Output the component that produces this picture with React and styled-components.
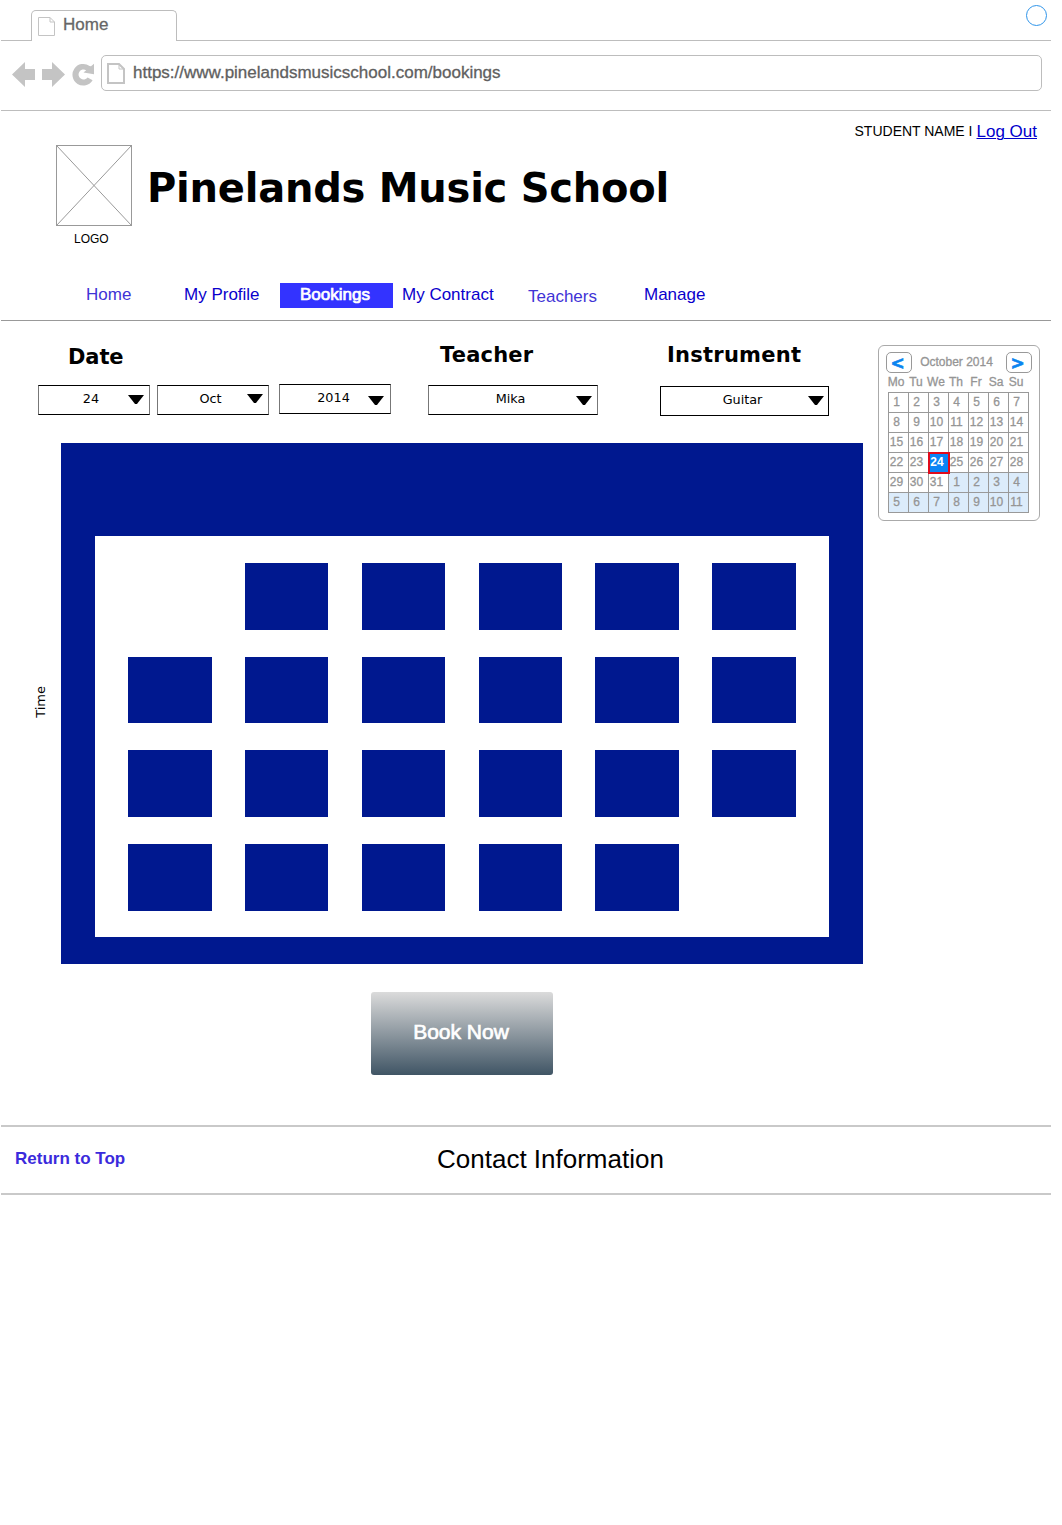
import React from "react";
import styled, { createGlobalStyle } from "styled-components";

const SANS = '"Liberation Sans", Arial, sans-serif';
const WIDE = '"DejaVu Sans", Verdana, sans-serif';
const NAVY = "#00188f";
const LINE = "#bdbdbd";

const GlobalStyle = createGlobalStyle`
  * { box-sizing: border-box; }
  body { margin: 0; background: #fff; font-family: ${SANS}; }
  #root { line-height: 1; }
`;

const Page = styled.div`
  width: 1051px;
  min-height: 1525px;
  padding-left: 1px;
  white-space: nowrap;
`;

/* Browser chrome */
const TabStrip = styled.div`
  display: flex;
  align-items: flex-end;
  height: 41px;
`;
const StripLine = styled.div`
  width: ${(p) => p.$width || "auto"};
  flex: ${(p) => (p.$width ? "none" : 1)};
  height: 41px;
  border-bottom: 1px solid ${LINE};
  display: flex;
  justify-content: flex-end;
  padding: 5px 4px 0 0;
`;
const Tab = styled.div`
  display: flex;
  gap: 8px;
  width: 146px;
  height: 31px;
  padding: 6px 0 0 6px;
  border: 1px solid ${LINE};
  border-bottom: 0;
  border-radius: 5px 5px 0 0;
`;
const TabTitle = styled.span`
  font-size: 17px;
  line-height: 16px;
  color: #666;
  -webkit-text-stroke: 0.3px #666;
`;
const Ring = styled.span`
  width: 21px;
  height: 21px;
  border: 1px solid #2f95ea;
  border-radius: 50%;
`;
const Toolbar = styled.div`
  display: flex;
  height: 70px;
  padding: 14px 9px 0 11px;
  border-bottom: 1px solid ${LINE};
`;
const Controls = styled.div`
  display: flex;
  gap: 7px;
  width: 89px;
  padding-top: 7px;
`;
const AddressBar = styled.div`
  display: flex;
  gap: 8px;
  flex: 1;
  height: 36px;
  padding: 7px 0 0 5px;
  border: 1px solid ${LINE};
  border-radius: 5px;
`;
const Address = styled.span`
  font-size: 17px;
  line-height: 20px;
  color: #606060;
  -webkit-text-stroke: 0.3px #606060;
`;

/* Site header */
const Header = styled.header`
  height: 210px;
  border-bottom: 1px solid #999;
`;
const Account = styled.div`
  display: flex;
  justify-content: flex-end;
  align-items: flex-start;
  gap: 4px;
  height: 34px;
  padding: 7px 14px 0 0;
`;
const StudentName = styled.span`
  font-size: 14px;
  line-height: 26px;
`;
const LogOut = styled.a`
  font-size: 17px;
  line-height: 27px;
  color: #0000cc;
  text-decoration: underline;
  text-decoration-thickness: 1px;
  text-underline-offset: 1px;
`;
const Brand = styled.div`
  display: flex;
  gap: 16px;
  height: 138px;
  padding-left: 55px;
`;
const LogoBlock = styled.div`
  display: flex;
  flex-direction: column;
  width: 76px;
`;
const LogoCaption = styled.span`
  font-size: 12px;
  line-height: 26px;
  padding-left: 18px;
`;
const Title = styled.h1`
  margin: 0 0 0 -1px;
  padding-top: 18px;
  font: bold 40px/50px ${WIDE};
  letter-spacing: -0.24px;
`;
const Nav = styled.nav`
  display: grid;
  grid-template-columns: 98px 96px 122px 126px 116px auto;
  padding-left: 85px;
`;
const NavLink = styled.a`
  font-size: 17px;
  line-height: 23px;
  color: ${(p) => (p.$visited ? "#3f33d6" : "#0a00cc")};
  padding-top: ${(p) => (p.$low ? 2 : 0)}px;
`;
const ActiveLink = styled(NavLink)`
  width: 113px;
  height: 25px;
  padding-left: 20px;
  background: #3333ff;
  color: #fff;
  -webkit-text-stroke: 0.7px #fff;
`;

/* Booking area */
const Main = styled.main`
  display: flex;
  gap: 16px;
  height: 804px;
`;
const Booking = styled.div`
  width: 861px;
`;
const Filters = styled.div`
  display: grid;
  grid-template-columns: 390px 232px auto;
  height: 122px;
  padding-left: 37px;
`;
const Heading = styled.h2`
  margin: 0;
  height: 63px;
  padding: ${(p) => p.$top}px 0 0 ${(p) => p.$left}px;
  font: bold 21px/24px ${WIDE};
  letter-spacing: ${(p) => p.$ls || 0}px;
`;
const SelectRow = styled.div`
  display: flex;
`;
const SelectBox = styled.div`
  display: flex;
  width: ${(p) => p.$width}px;
  height: 30px;
  margin: ${(p) => p.$top}px ${(p) => p.$gap || 0}px 0 0;
  padding-right: ${(p) => p.$inset}px;
  border: 1px solid #000;
  border-left-color: ${(p) => p.$side};
  border-right-color: ${(p) => p.$side};
`;
const SelectValue = styled.span`
  flex: 1;
  padding-left: ${(p) => p.$pad}px;
  text-align: center;
  font: 12.8px/26px ${WIDE};
`;
const Arrow = styled.span`
  width: 16px;
  height: 9px;
  margin-top: ${(p) => p.$top}px;
  background: #000;
  clip-path: polygon(0 0, 100% 0, 56% 100%, 44% 100%);
`;
const Schedule = styled.div`
  display: flex;
  height: 521px;
`;
const Axis = styled.div`
  flex: none;
  display: flex;
  align-items: center;
  width: 60.4px;
  padding: 0 0 3px 32px;
`;
const AxisLabel = styled.span`
  font: 13px/16px ${WIDE};
  writing-mode: vertical-rl;
  transform: rotate(180deg);
`;
const Board = styled.div`
  flex: none;
  width: 801.2px;
  padding: 93.4px 33.4px 27px 33.5px;
  background: ${NAVY};
`;
const Slots = styled.div`
  display: grid;
  grid-template-columns: repeat(6, 83.4px);
  grid-template-rows: repeat(4, 66.8px);
  gap: 26.8px 33.4px;
  height: 400.6px;
  padding: 26.7px 33.4px;
  background: #fff;
`;
const Slot = styled.div`
  background: ${(p) => (p.$open ? NAVY : "transparent")};
`;
const BookButton = styled.button`
  display: block;
  width: 182px;
  height: 83px;
  margin: 28px 0 0 370px;
  padding: 0 2px 4px 0;
  border: 0;
  border-radius: 3px;
  background: linear-gradient(#dbdbdb, #405565);
  color: #fff;
  font: 21px/24px ${SANS};
  -webkit-text-stroke: 0.7px #fff;
`;

/* Month picker */
const Picker = styled.aside`
  width: 162px;
  height: 176px;
  margin-top: 24px;
  padding: 7px 0 0 7px;
  border: 1px solid #aaa;
  border-radius: 6px;
  color: #959595;
  font-size: 12px;
`;
const PickerHead = styled.div`
  display: flex;
  width: 146px;
  height: 20px;
  justify-content: space-between;
  line-height: 18px;
  -webkit-text-stroke: 0.3px #959595;
`;
const Month = styled.span`
  margin-left: -5px;
`;
const Step = styled.span`
  width: 26px;
  height: 21px;
  margin-top: -1px;
  padding-right: 3px;
  border: 1px solid #999;
  border-radius: 5px;
  text-align: center;
  color: #0a84f0;
  font: bold 17px/20px ${WIDE};
  -webkit-text-stroke: 0.6px #0a84f0;
`;
const WeekRow = styled.div`
  display: grid;
  grid-template-columns: repeat(7, 20px);
  width: 140px;
  line-height: 19px;
  text-align: center;
  -webkit-text-stroke: 0.3px #959595;
  & > span { justify-self: center; }
`;
const Days = styled.div`
  display: grid;
  grid-template-columns: repeat(7, 20px);
  grid-auto-rows: 20px;
  width: 141px;
  margin-left: 2px;
  border: 1px solid #999;
  border-width: 1px 0 0 1px;
`;
const Day = styled.span`
  padding-right: 4px;
  border: 1px solid #999;
  border-width: 0 1px 1px 0;
  background: ${(p) => (p.$next ? "#dcecfb" : "#fff")};
  text-align: center;
  line-height: 18px;
  -webkit-text-stroke: 0.3px #959595;
`;
const Today = styled.span`
  margin: -1px -1px -1px -1px;
  padding-right: 4px;
  border: 2px solid #e00b1c;
  background: #0a84f5;
  color: #fff;
  font-weight: bold;
  text-align: center;
  line-height: 16px;
  z-index: 1;
`;

/* Footer */
const Footer = styled.footer`
  display: flex;
  height: 70px;
  padding-left: 14px;
  border: solid #c9c9c9;
  border-width: 2px 0;
`;
const ReturnLink = styled.a`
  width: 422px;
  font-size: 17px;
  font-weight: bold;
  line-height: 63px;
  color: #3b2bdc;
`;
const Contact = styled.span`
  font-size: 26px;
  line-height: 64px;
`;

const FileIcon = ({ w, h, stroke, fold }) => {
  const a = stroke / 2;
  return (
    <svg width={w} height={h} fill="none" stroke="#c4c4c4" strokeWidth={stroke}>
      <path d={`M${a} ${a}H${w - fold}L${w - a} ${fold}V${h - a}H${a}Z`} />
      <path d={`M${w - fold} ${a}V${fold}H${w - a}`} strokeWidth="1" />
    </svg>
  );
};

const Select = ({ value, width = 112, top = 1, gap, pad = 14, arrow, inset = 5, side = "#777" }) => (
  <SelectBox $width={width} $top={top} $gap={gap} $side={side} $inset={inset}>
    <SelectValue $pad={pad}>{value}</SelectValue>
    <Arrow $top={arrow} />
  </SelectBox>
);

const days = [...Array(31).keys(), ...Array(11).keys()].map((n) => n + 1);

export default function App() {
  return (
    <Page>
      <GlobalStyle />
      <TabStrip>
        <StripLine $width="30px" />
        <Tab>
          <FileIcon w={17} h={19} stroke={1} fold={5} />
          <TabTitle>Home</TabTitle>
        </Tab>
        <StripLine>
          <Ring />
        </StripLine>
      </TabStrip>
      <Toolbar>
        <Controls>
          <svg width="23" height="25" fill="#c4c4c4">
            <path d="M0 12.5L13 0V7H23V18H13V25Z" />
          </svg>
          <svg width="23" height="25" fill="#c4c4c4">
            <path d="M23 12.5L10 0V7H0V18H10V25Z" />
          </svg>
          <svg width="23" height="25" fill="#c4c4c4">
            <path d="M19 4.2L22 1.8V12.2L11.5 10.6L14.2 8.2A5 5 0 1 0 15.6 15.4L20.6 18.2A10.8 10.8 0 1 1 17.6 4Z" />
          </svg>
        </Controls>
        <AddressBar>
          <FileIcon w={18} h={21} stroke={2} fold={6} />
          <Address>https://www.pinelandsmusicschool.com/bookings</Address>
        </AddressBar>
      </Toolbar>

      <Header>
        <Account>
          <StudentName>STUDENT NAME I</StudentName>
          <LogOut>Log Out</LogOut>
        </Account>
        <Brand>
          <LogoBlock>
            <svg width="76" height="81" fill="none" stroke="#999">
              <rect x="0.5" y="0.5" width="75" height="80" />
              <path d="M0.5 0.5L75.5 80.5M75.5 0.5L0.5 80.5" />
            </svg>
            <LogoCaption>LOGO</LogoCaption>
          </LogoBlock>
          <Title>Pinelands Music School</Title>
        </Brand>
        <Nav>
          <NavLink $visited>Home</NavLink>
          <NavLink>My Profile</NavLink>
          <ActiveLink>Bookings</ActiveLink>
          <NavLink>My Contract</NavLink>
          <NavLink $visited $low>Teachers</NavLink>
          <NavLink>Manage</NavLink>
        </Nav>
      </Header>

      <Main>
        <Booking>
          <Filters>
            <div>
              <Heading $top={24} $left={30} $ls={-0.1}>Date</Heading>
              <SelectRow>
                <Select value="24" gap={7} arrow={9} pad={15} />
                <Select value="Oct" gap={10} arrow={8} pad={16} />
                <Select value="2014" top={0} arrow={11} pad={19} inset={6} />
              </SelectRow>
            </div>
            <div>
              <Heading $top={22} $left={12} $ls={0.2}>Teacher</Heading>
              <Select value="Mika" width={170} pad={16} arrow={10} />
            </div>
            <div>
              <Heading $top={22} $left={7} $ls={0.25}>Instrument</Heading>
              <Select value="Guitar" width={169} top={2} pad={16} arrow={9} inset={4} side="#000" />
            </div>
          </Filters>
          <Schedule>
            <Axis>
              <AxisLabel>Time</AxisLabel>
            </Axis>
            <Board>
              <Slots>
                {Array.from({ length: 24 }, (_, i) => (
                  <Slot key={i} $open={i !== 0 && i !== 23} />
                ))}
              </Slots>
            </Board>
          </Schedule>
          <BookButton>Book Now</BookButton>
        </Booking>
        <Picker>
          <PickerHead>
            <Step>&lt;</Step>
            <Month>October 2014</Month>
            <Step>&gt;</Step>
          </PickerHead>
          <WeekRow>
            {["Mo", "Tu", "We", "Th", "Fr", "Sa", "Su"].map((d) => (
              <span key={d}>{d}</span>
            ))}
          </WeekRow>
          <Days>
            {days.map((d, i) =>
              i === 23 ? <Today key={i}>{d}</Today> : <Day key={i} $next={i > 30}>{d}</Day>
            )}
          </Days>
        </Picker>
      </Main>

      <Footer>
        <ReturnLink>Return to Top</ReturnLink>
        <Contact>Contact Information</Contact>
      </Footer>
    </Page>
  );
}
